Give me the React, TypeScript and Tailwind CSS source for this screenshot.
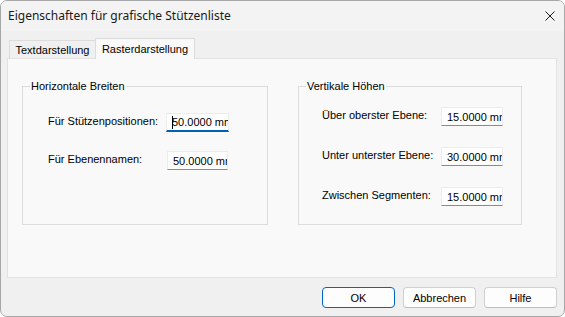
import React, { FC } from "react";

interface FieldProps {
  label: string;
  value: string;
  focused?: boolean;
  labelWidth: string;
  inputWidth: string;
}

const Field: FC<FieldProps> = ({ label, value, focused, labelWidth, inputWidth }) => (
  <div className="flex items-center">
    <span className={`${labelWidth} -mt-[3px] shrink-0 whitespace-nowrap text-[11px] leading-[16px] text-black`}>
      {label}
    </span>
    <div
      className={`${inputWidth} relative flex h-[19px] shrink-0 items-center overflow-hidden whitespace-nowrap border border-[#ececec] bg-white pl-[5px] text-[11px] leading-[16px] text-black ${
        focused ? "border-b-2 border-b-[#005fb8]" : "border-b-[#8a8a8a]"
      }`}
    >
      {focused && <span className="absolute left-[5px] top-[2px] h-[13px] w-px bg-black" />}
      {value}
    </div>
  </div>
);

const GroupBox: FC<{ title: string; className: string; children: React.ReactNode }> = ({
  title,
  className,
  children,
}) => (
  <fieldset className={`border border-[#dcdcdc] px-0 ${className}`}>
    <legend className="ml-[7px] px-[1px] text-[11px] leading-[16px] text-black">{title}</legend>
    {children}
  </fieldset>
);

const Button: FC<{ label: string; primary?: boolean }> = ({ label, primary }) => (
  <button
    className={`flex h-[21px] w-[73px] items-center justify-center rounded-[4px] border bg-[#fdfdfd] text-[11px] leading-[16px] text-black ${
      primary ? "border-[#0067c0]" : "border-[#d0d0d0] border-b-[#bdbdbd]"
    }`}
  >
    {label}
  </button>
);

export default function App() {
  return (
    <div className="flex h-[317px] w-[565px] flex-col overflow-hidden rounded-[7px] border border-[#a7a7a7] bg-[#f0f0f0] font-['Liberation_Sans',Arial,sans-serif]">
      {/* title bar */}
      <div className="flex h-[30px] shrink-0 items-center justify-between bg-[#f3f3f3] pl-[7px] pr-[9px]">
        <span className="font-['Noto_Sans',sans-serif] text-[12px] leading-[16px] text-[#1a1a1a]">
          Eigenschaften für grafische Stützenliste
        </span>
        <svg width="10" height="10" viewBox="0 0 10 10">
          <path d="M0.5 0.5 L9.5 9.5 M9.5 0.5 L0.5 9.5" stroke="#1a1a1a" strokeWidth="1" />
        </svg>
      </div>

      <div className="flex flex-1 flex-col pl-[6px] pr-[7px] pt-[7px]">
        {/* tabs */}
        <div className="flex h-[20px] items-end pl-[2px]">
          <div className="-mr-px flex h-[18px] w-[87px] items-center justify-center border border-b-0 border-[#dcdcdc] bg-[#f0f0f0] pt-[1px] text-[11px] leading-[16px] text-black">
            Textdarstellung
          </div>
          <div className="relative z-10 -mb-px flex h-[21px] w-[100px] items-start justify-center border border-b-0 border-[#dcdcdc] bg-[#f9f9f9] pt-[2px] text-[11px] leading-[16px] text-black">
            Rasterdarstellung
          </div>
        </div>

        {/* tab page */}
        <div className="flex h-[220px] w-[550px] items-start border border-[#e2e2e2] bg-[#f9f9f9] pl-[14px] pt-[19px]">
          <GroupBox title="Horizontale Breiten" className="h-[147px] w-[246px]">
            <div className="flex flex-col gap-[19px] pl-[25px] pt-[19px]">
              <Field label="Für Stützenpositionen:" value="50.0000 mm" focused labelWidth="w-[118px]" inputWidth="w-[63px]" />
              <Field label="Für Ebenennamen:" value="50.0000 mm" labelWidth="w-[119px]" inputWidth="w-[61px]" />
            </div>
          </GroupBox>
          <GroupBox title="Vertikale Höhen" className="ml-[30px] h-[147px] w-[224px]">
            <div className="flex flex-col gap-[21px] pl-[23px] pt-[13px]">
              <Field label="Über oberster Ebene:" value="15.0000 mm" labelWidth="w-[119px]" inputWidth="w-[62px]" />
              <Field label="Unter unterster Ebene:" value="30.0000 mm" labelWidth="w-[119px]" inputWidth="w-[62px]" />
              <Field label="Zwischen Segmenten:" value="15.0000 mm" labelWidth="w-[119px]" inputWidth="w-[62px]" />
            </div>
          </GroupBox>
        </div>

        {/* buttons */}
        <div className="mt-[9px] flex justify-end gap-[8px]">
          <Button label="OK" primary />
          <Button label="Abbrechen" />
          <Button label="Hilfe" />
        </div>
      </div>
    </div>
  );
}
